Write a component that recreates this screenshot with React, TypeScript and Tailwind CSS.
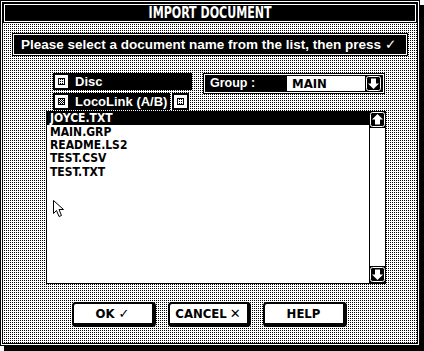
import React from "react";

const dots =
  "bg-[repeating-conic-gradient(#000_0_25%,#fff_0_100%)] bg-size-[2px_2px]";
const wide = "font-['Liberation_Sans','DejaVu_Sans',sans-serif] font-bold";
const narrow =
  "font-['DejaVu_Sans_Condensed','Liberation_Sans_Narrow','Liberation_Sans',sans-serif] font-bold";

function ArrowBox({ dir, className = "" }: { dir: "up" | "down"; className?: string }) {
  return (
    <svg width="17" height="17" viewBox="0 0 17 17" className={className}>
      <rect x="0" y="0" width="17" height="17" fill="#000" />
      <rect x="1.5" y="1.5" width="14" height="14" rx="2" fill="#000" stroke="#fff" />
      {dir === "up" ? (
        <path d="M8.5 3 L14 8.5 L11 8.5 L11 13.5 L6 13.5 L6 8.5 L3 8.5 Z" fill="#fff" />
      ) : (
        <path d="M8.5 14 L14 8.5 L11 8.5 L11 3.5 L6 3.5 L6 8.5 L3 8.5 Z" fill="#fff" />
      )}
    </svg>
  );
}

function CheckBox({ on }: { on?: boolean }) {
  return (
    <div className="w-[17px] h-[17px] bg-black p-px shrink-0">
      <div className="w-full h-full bg-white border border-black flex items-center justify-center">
        <div
          className={`w-[7px] h-[7px] border border-black ${
            on
              ? "bg-[repeating-conic-gradient(#000_0_25%,#fff_0_50%)] bg-size-[2px_2px]"
              : dots
          }`}
        />
      </div>
    </div>
  );
}

function Button({ w, children }: { w: string; children: React.ReactNode }) {
  return (
    <div
      className={`${w} h-[25px] rounded-[4px] border-black border-t-2 border-l-2 border-r-[4px] border-b-[4px] bg-white flex items-center justify-center text-[13px] text-black ${narrow}`}
    >
      {children}
    </div>
  );
}

const files = ["JOYCE.TXT", "MAIN.GRP", "README.LS2", "TEST.CSV", "TEST.TXT"];

export default function App() {
  return (
    <div className="w-[424px] h-[351px] bg-white relative overflow-hidden">
      <div className="w-[420px] h-[346px] border border-black bg-white p-px shadow-[4px_5px_0_#000]">
        <div className="h-full border border-black flex flex-col">
          {/* title */}
          <div className="bg-black p-px">
            <div className="h-[18px] border border-white flex items-center justify-center">
              <span className={`inline-block scale-x-[0.82] text-white text-[15px] leading-none ${narrow}`}>
                IMPORT DOCUMENT
              </span>
            </div>
          </div>
          <div className="h-px bg-white" />

          {/* body */}
          <div className={`flex-1 ${dots} flex flex-col`}>
            <div className="mt-[9px] mx-[9px] bg-black p-px">
              <div className="h-[21px] border border-white flex items-center pl-[7px]">
                <span className={`text-white text-[13.5px] leading-none ${wide}`}>
                  Please select a document name from the list, then press{" "}
                  <span className="font-['DejaVu_Sans',sans-serif]">✓</span>
                </span>
              </div>
            </div>

            <div className="mt-[17px] ml-[50px] flex gap-[11px]">
              <div className="flex flex-col gap-[3px]">
                <div className="w-[139px] h-[17px] bg-black flex items-center gap-[5px]">
                  <CheckBox />
                  <span className={`text-white text-[13px] leading-none ${wide}`}>Disc</span>
                </div>
                <div className="flex gap-[2px]">
                  <div className="w-[117px] h-[17px] bg-black flex items-center gap-[5px]">
                    <CheckBox on />
                    <span className={`text-white text-[13px] leading-none whitespace-nowrap ${wide}`}>
                      LocoLink (A/B)
                    </span>
                  </div>
                  <CheckBox />
                </div>
              </div>

              <div className="w-[182px] h-[21px] bg-black p-px">
                <div className="h-full border border-white flex items-center pr-[1px]">
                  <span className={`text-white text-[12.5px] leading-none pl-[5px] ${wide}`}>Group :</span>
                  <div className="ml-auto w-[78px] h-[15px] bg-white flex items-center pl-[5px]">
                    <span className={`text-black text-[13px] leading-none ${narrow}`}>MAIN</span>
                  </div>
                  <ArrowBox dir="down" />
                </div>
              </div>
            </div>

            {/* list */}
            <div className="mt-[1px] ml-[43px] w-[340px] h-[173px] flex">
              <div className="flex-1 bg-white border-l border-b border-black flex flex-col">
                {files.map((f, i) => (
                  <div
                    key={f}
                    className={`${i === 0 ? "h-[14px] bg-black text-white" : "h-[13.33px] text-black"} pl-[3px] flex items-center text-[12px] leading-[12px] ${narrow}`}
                  >
                    {f}
                  </div>
                ))}
              </div>
              <div className="w-[17px] bg-white border-x border-b border-black flex flex-col justify-between">
                <ArrowBox dir="up" className="-mx-px" />
                <ArrowBox dir="down" className="-mx-px" />
              </div>
            </div>

            <div className="mt-[18px] flex justify-center gap-[12px] pr-[2px]">
              <Button w="w-[84px]">
                OK <span className="ml-[4px] font-['DejaVu_Sans',sans-serif]">✓</span>
              </Button>
              <Button w="w-[83px]">
                CANCEL <span className="ml-[3px] font-['DejaVu_Sans',sans-serif]">✕</span>
              </Button>
              <Button w="w-[84px]">HELP</Button>
            </div>
          </div>
        </div>
      </div>

      {/* mouse pointer */}
      <svg className="absolute left-[53px] top-[200px]" width="12" height="18" viewBox="0 0 12 18">
        <path d="M0.5 0.5 L0.5 13.5 L3.5 10.5 L6 16.5 L8.5 15.5 L6 9.5 L10.5 9.5 Z" fill="#fff" stroke="#000" />
      </svg>
    </div>
  );
}
